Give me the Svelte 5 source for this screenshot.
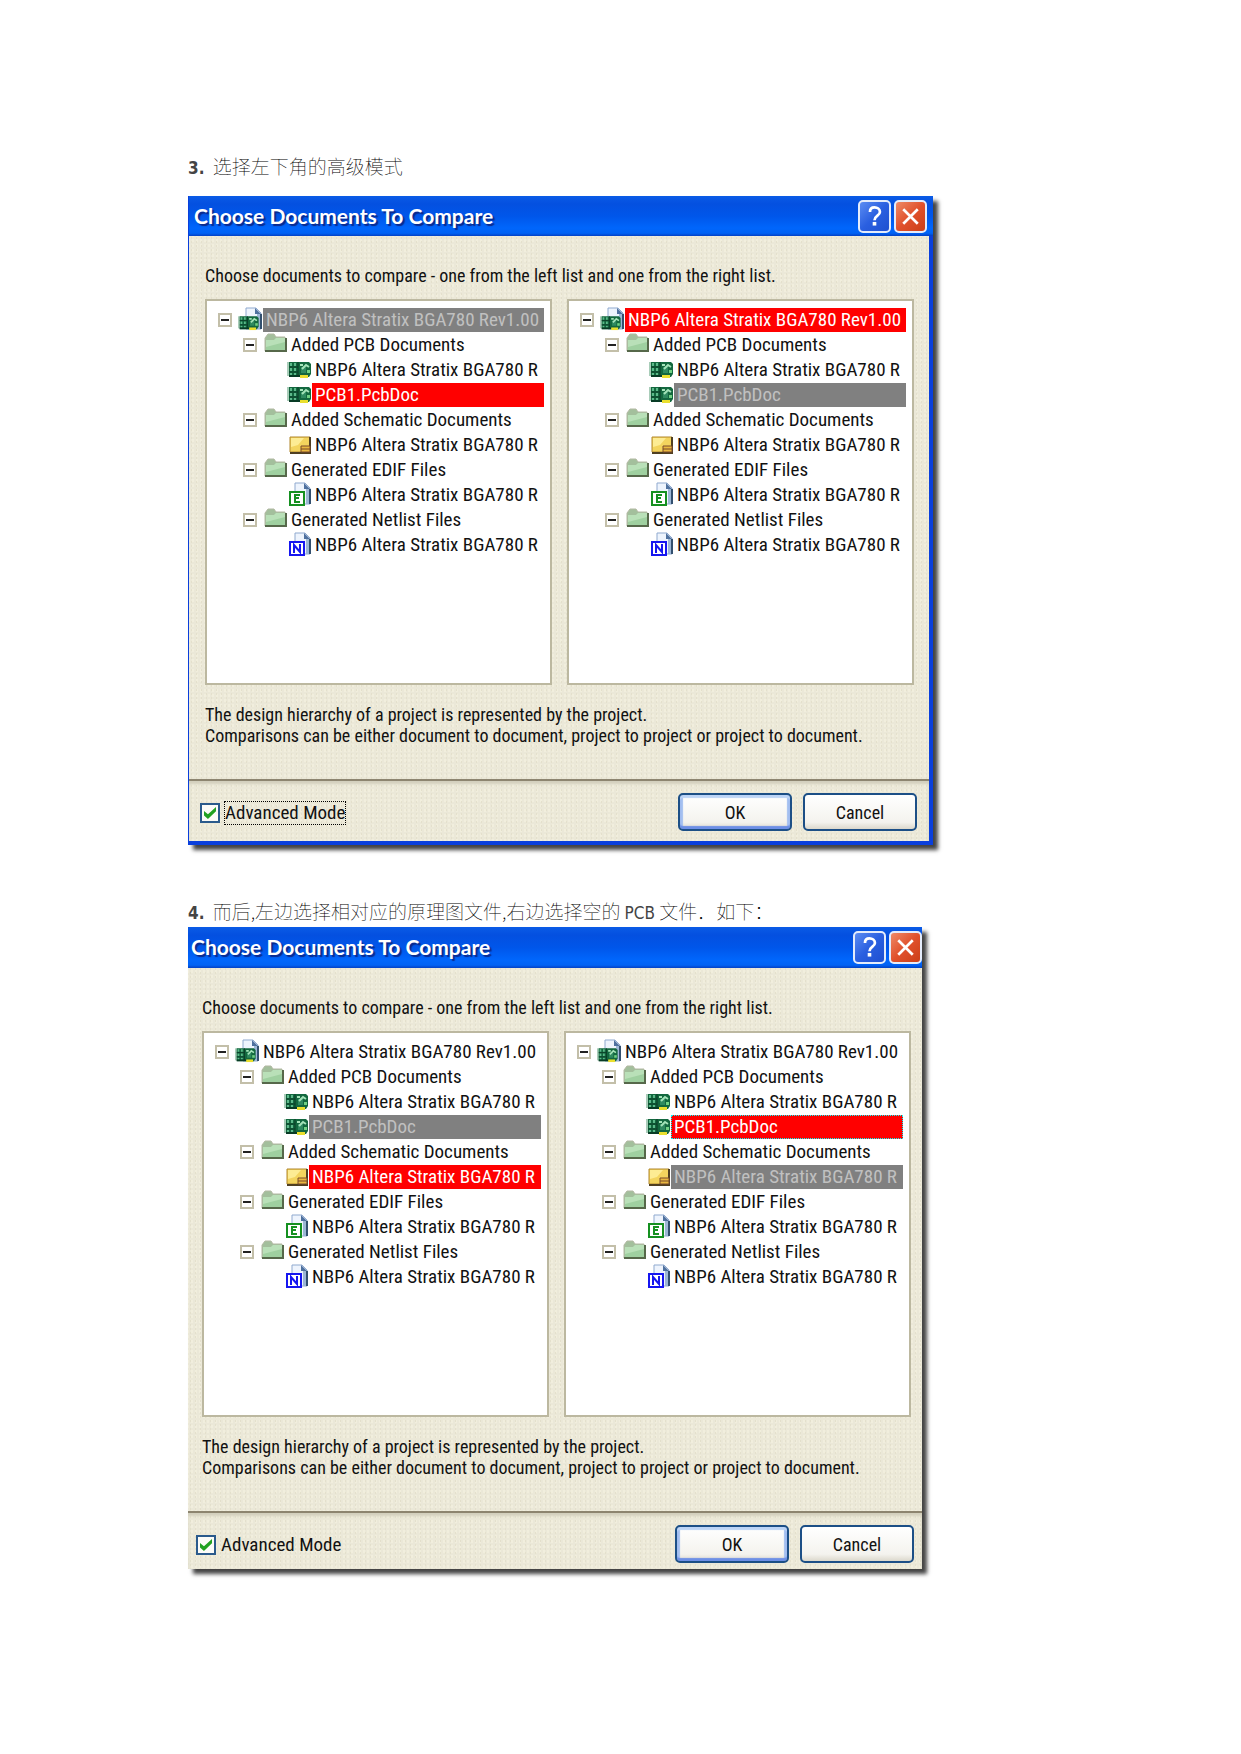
<script lang="ts">
	type Mark = "" | "red" | "gray" | "red focused";
	type Kind = "project" | "folder" | "pcb" | "sch" | "edif" | "net";

	const doc = "NBP6 Altera Stratix BGA780 R";

	const tree: { kind: Kind; level: number; text: string }[] = [
		{ kind: "project", level: 0, text: "NBP6 Altera Stratix BGA780 Rev1.00" },
		{ kind: "folder", level: 1, text: "Added PCB Documents" },
		{ kind: "pcb", level: 2, text: doc },
		{ kind: "pcb", level: 2, text: "PCB1.PcbDoc" },
		{ kind: "folder", level: 1, text: "Added Schematic Documents" },
		{ kind: "sch", level: 2, text: doc },
		{ kind: "folder", level: 1, text: "Generated EDIF Files" },
		{ kind: "edif", level: 2, text: doc },
		{ kind: "folder", level: 1, text: "Generated Netlist Files" },
		{ kind: "net", level: 2, text: doc },
	];

	// row index -> highlight, one record per list
	const dialogs: { id: string; framed: boolean; lists: Record<number, Mark>[] }[] = [
		{ id: "advanced", framed: true, lists: [{ 0: "gray", 3: "red" }, { 0: "red", 3: "gray" }] },
		{ id: "selected", framed: false, lists: [{ 3: "gray", 5: "red" }, { 3: "red focused", 5: "gray" }] },
	];

	let checked = $state([true, true]);
</script>

{#snippet page()}
	<path d="M8 1h10l5 5v16H8z" fill="#eef4fd" stroke="#8fa9cf" />
	<path d="M19 7h4v15h-4z" fill="#9db7d6" />
	<path d="M17 1l6 6h-6z" fill="#4f719f" />
	<path d="M23 7v15" stroke="#33506f" stroke-width="2" />
{/snippet}

{#snippet board()}
	<path d="M0 5h3v14H0z" fill="#a9cdb9" />
	<path d="M2 5h20l2 2v10l-2 3H2z" fill="#13683f" />
	<path d="M3 6h2v3H3zM7 6h2v3H7zM3 11h2v3H3zM7 11h2v3H7zM3 16h2v2H3zM7 16h2v2H7z" fill="#5cb98a" />
	<path d="M11 5v14M2 10h9M2 15h9" stroke="#0a3a26" />
	<path d="M14 10h5v6h-5z" fill="#2f8a60" />
	<path d="M15 12l4-4 3 2M13 8h3" stroke="#a4e3b9" fill="none" stroke-width="2" />
	<path d="M20 13h3v3h-3z" fill="#70d183" />
	<path d="M2 19h11" stroke="#083b25" stroke-width="2" />
	<path d="M13 18h8v3h-8z" fill="#eadf2e" />
{/snippet}

{#snippet icon(kind: Kind)}
	<svg class="icon" viewBox="0 0 25 25" width="25" height="25" aria-hidden="true">
		{#if kind === "project"}
			{@render page()}
			<g transform="translate(0 5) scale(0.86)">{@render board()}</g>
		{:else if kind === "folder"}
			<path d="M2 6l3-4h6l2 3h9v14H2z" fill="#a3bf9c" stroke="#b3b9a3" />
			<path d="M3 8h8l2-2h9v13H3z" fill="#9fd0a0" />
			<path d="M3 8h8l2-2h9v4L3 15z" fill="#b9e0b8" />
			<path d="M2 19h21V6" stroke="#56684a" stroke-width="2" fill="none" />
		{:else if kind === "pcb"}
			{@render board()}
		{:else if kind === "sch"}
			<path d="M3 5h20v15H3z" fill="#f3d45e" stroke="#b1872c" />
			<path d="M4 6h13l-6 7-7 2z" fill="#fdec94" />
			<path d="M23 5v16H3" stroke="#4f3f22" stroke-width="2" fill="none" />
			<path d="M14 14h9v6h-9z" fill="#e9b840" stroke="#7a4a2a" />
			<path d="M14 17h9" stroke="#7a4a2a" />
		{:else}
			{@render page()}
			<path
				d="M3 10h14v13H3z"
				fill="#fff"
				stroke={kind === "edif" ? "#159020" : "#1616f0"}
				stroke-width="2"
			/>
			{#if kind === "edif"}
				<path d="M13 13H8v7h5M8 16h4" stroke="#159020" stroke-width="2" fill="none" />
			{:else}
				<path d="M7 21v-8l6 7v-8" stroke="#1616f0" stroke-width="2" fill="none" />
			{/if}
		{/if}
	</svg>
{/snippet}

{#snippet dialog(index: number)}
	{@const d = dialogs[index]}
	<section class="dialog" class:framed={d.framed} aria-labelledby="{d.id}-title">
		<header>
			<h2 id="{d.id}-title">Choose Documents To Compare</h2>
			<button class="caption help" aria-label="Help">
				<svg viewBox="0 0 32 32" aria-hidden="true">
					<path
						d="M11 11c0-3 2-5 5-5s6 2 6 5c0 4-6 4-6 9"
						stroke="#fff"
						stroke-width="3"
						fill="none"
					/>
					<path d="M14 22h4v4h-4z" fill="#fff" />
				</svg>
			</button>
			<button class="caption close" aria-label="Close">
				<svg viewBox="0 0 32 32" aria-hidden="true">
					<path d="M8 8l16 16M24 8L8 24" stroke="#fff" stroke-width="3" />
				</svg>
			</button>
		</header>

		<div class="content">
			<p class="prompt">
				Choose documents to compare - one from the left list and one from the right list.
			</p>
			<div class="lists">
				{#each d.lists as marks}
					<ul>
						{#each tree as row, i}
							<li class="level{row.level}">
								{#if row.level < 2}
									<button class="toggle" aria-label="Collapse {row.text}"></button>
								{/if}
								{@render icon(row.kind)}
								<span class="label {marks[i] ?? ''}">{row.text}</span>
							</li>
						{/each}
					</ul>
				{/each}
			</div>
			<p class="note">
				The design hierarchy of a project is represented by the project.<br />
				Comparisons can be either document to document, project to project or project to document.
			</p>
		</div>

		<footer>
			<label>
				<input type="checkbox" bind:checked={checked[index]} />
				<span class:dotted={d.framed}>Advanced Mode</span>
			</label>
			<button class="push default">OK</button>
			<button class="push">Cancel</button>
		</footer>
	</section>
{/snippet}

<main>
	<p class="step"><b>3.</b> 选择左下角的高级模式</p>
	{@render dialog(0)}
	<p class="step second"><b>4.</b> 而后,左边选择相对应的原理图文件,右边选择空的 <b>PCB</b> 文件．如下：</p>
	{@render dialog(1)}
</main>

<style>
	:global(body) {
		margin: 0;
		background: #fff;
	}
	main {
		max-width: 745px;
		padding: 152px 188px;
		font-family: "Roboto Condensed", "Liberation Sans", sans-serif;
		font-size: 18px;
		color: #111;
	}
	p,
	h2,
	ul {
		margin: 0;
		padding: 0;
	}
	button {
		padding: 0;
		font: inherit;
		color: inherit;
	}

	.step {
		margin-bottom: 16px;
		font-family: "Noto Sans CJK SC", sans-serif;
		font-size: 19px;
		font-weight: 100;
		line-height: 28px;
		color: #000;
	}
	.step b {
		font-family: "DejaVu Sans Condensed", sans-serif;
		font-size: 17px;
		font-weight: 400;
		line-height: 1;
		color: #444;
	}
	.step b:first-child {
		margin-right: 4px;
		font-weight: 700;
	}
	.step.second {
		margin: 52px 0 2px;
	}

	.dialog {
		--left: 14px;
		--right: 11px;
		margin-right: 11px;
		background:
			radial-gradient(#e4e0cc 1px, transparent 1px) 0 0 / 5px 4px,
			radial-gradient(#f1eedd 1px, transparent 1px) 2px 2px / 4px 5px,
			#ebe8d8;
		box-shadow: 5px 5px 4px #444;
	}
	.dialog.framed {
		--left: 16px;
		--right: 15px;
		margin-right: 0;
		border: solid #0a3fdc;
		border-width: 0 4px 4px 1px;
	}

	header {
		display: flex;
		align-items: center;
		gap: 3px;
		height: 41px;
		padding-left: 3px;
		background: linear-gradient(#0a5be6, #0450e0 20%, #0056ea 50%, #0066fc 80%, #0062f4 93%, #0340c4);
	}
	.framed header {
		height: 40px;
		margin-right: -4px;
		padding: 0 6px 0 5px;
	}
	h2 {
		flex: 1;
		padding-bottom: 2px;
		font-family: Lato, sans-serif;
		font-size: 21px;
		font-weight: 700;
		color: #fff;
		text-shadow: 2px 2px 1px #0a2a8c;
	}
	.caption {
		box-sizing: border-box;
		width: 33px;
		height: 33px;
		border: 2px solid #e4ecfb;
		border-radius: 5px;
	}
	.caption svg {
		display: block;
	}
	.help {
		background: linear-gradient(135deg, #5b8cf2, #2a5fe0 50%, #1f50d0);
	}
	.close {
		background: linear-gradient(135deg, #ee8a68, #e0512c 50%, #cc3f18);
	}

	.content {
		padding: 28px var(--right) 0 var(--left);
	}
	.prompt {
		margin-bottom: 11px;
		line-height: 24px;
	}
	.lists {
		display: grid;
		grid-template-columns: 1fr 1fr;
		gap: 15px;
	}
	ul {
		box-sizing: border-box;
		min-height: 386px;
		padding: 6px 6px 6px 11px;
		border: 2px solid #bcb8a0;
		background: #fff;
		list-style: none;
		overflow: hidden;
	}
	li {
		display: flex;
		align-items: center;
		height: 25px;
		font-size: 19px;
		white-space: nowrap;
	}
	.level1 {
		padding-left: 25px;
	}
	.level2 {
		padding-left: 69px;
	}
	.toggle {
		box-sizing: border-box;
		flex: none;
		width: 14px;
		height: 14px;
		margin-right: 6px;
		border: 2px solid #c3bfa9;
		background: linear-gradient(#222, #222) center / 8px 2px no-repeat #fff;
	}
	.icon {
		flex: none;
	}
	.label {
		flex: 1;
		padding-left: 3px;
		line-height: 24px;
	}
	.red {
		background: #f00;
		color: #fff;
	}
	.gray {
		background: #808080;
		color: #c0c0c0;
	}
	.focused {
		outline: 1px dotted #0ff;
		outline-offset: -1px;
	}
	.note {
		margin-top: 19px;
		padding-bottom: 33px;
		line-height: 21px;
	}

	footer {
		display: flex;
		align-items: flex-start;
		gap: 11px;
		padding: 12px 8px 6px;
		border-top: 2px solid #8d8570;
		box-shadow: inset 0 3px 3px #d2cfbd;
	}
	.framed footer {
		padding: 12px 12px 10px 11px;
	}
	label {
		display: flex;
		flex: 1;
		align-items: center;
		gap: 4px;
		padding-top: 8px;
		font-size: 19px;
	}
	label span {
		border: 1px dotted transparent;
		line-height: 22px;
	}
	label .dotted {
		border-color: #000;
	}
	input {
		box-sizing: border-box;
		appearance: none;
		width: 20px;
		height: 20px;
		margin: 0;
		border: 2px solid #2a5a8c;
		background: #fbfbf8;
	}
	input:checked::before {
		content: "";
		display: block;
		width: 12px;
		height: 12px;
		margin: 2px;
		background: #21a121;
		clip-path: polygon(0 33%, 33% 60%, 100% 0, 100% 36%, 33% 100%, 0 70%);
	}
	.push {
		box-sizing: border-box;
		width: 114px;
		height: 38px;
		border: 2px solid #1c4f86;
		border-radius: 5px;
		background: linear-gradient(#fff, #f4f3ee 80%, #dcd8cc);
	}
	.push.default {
		box-shadow:
			inset 0 3px 1px #bcd4f6,
			inset 0 -3px 1px #6d8fe6,
			inset 3px 0 1px #a3bff0,
			inset -3px 0 1px #a3bff0;
	}
</style>
